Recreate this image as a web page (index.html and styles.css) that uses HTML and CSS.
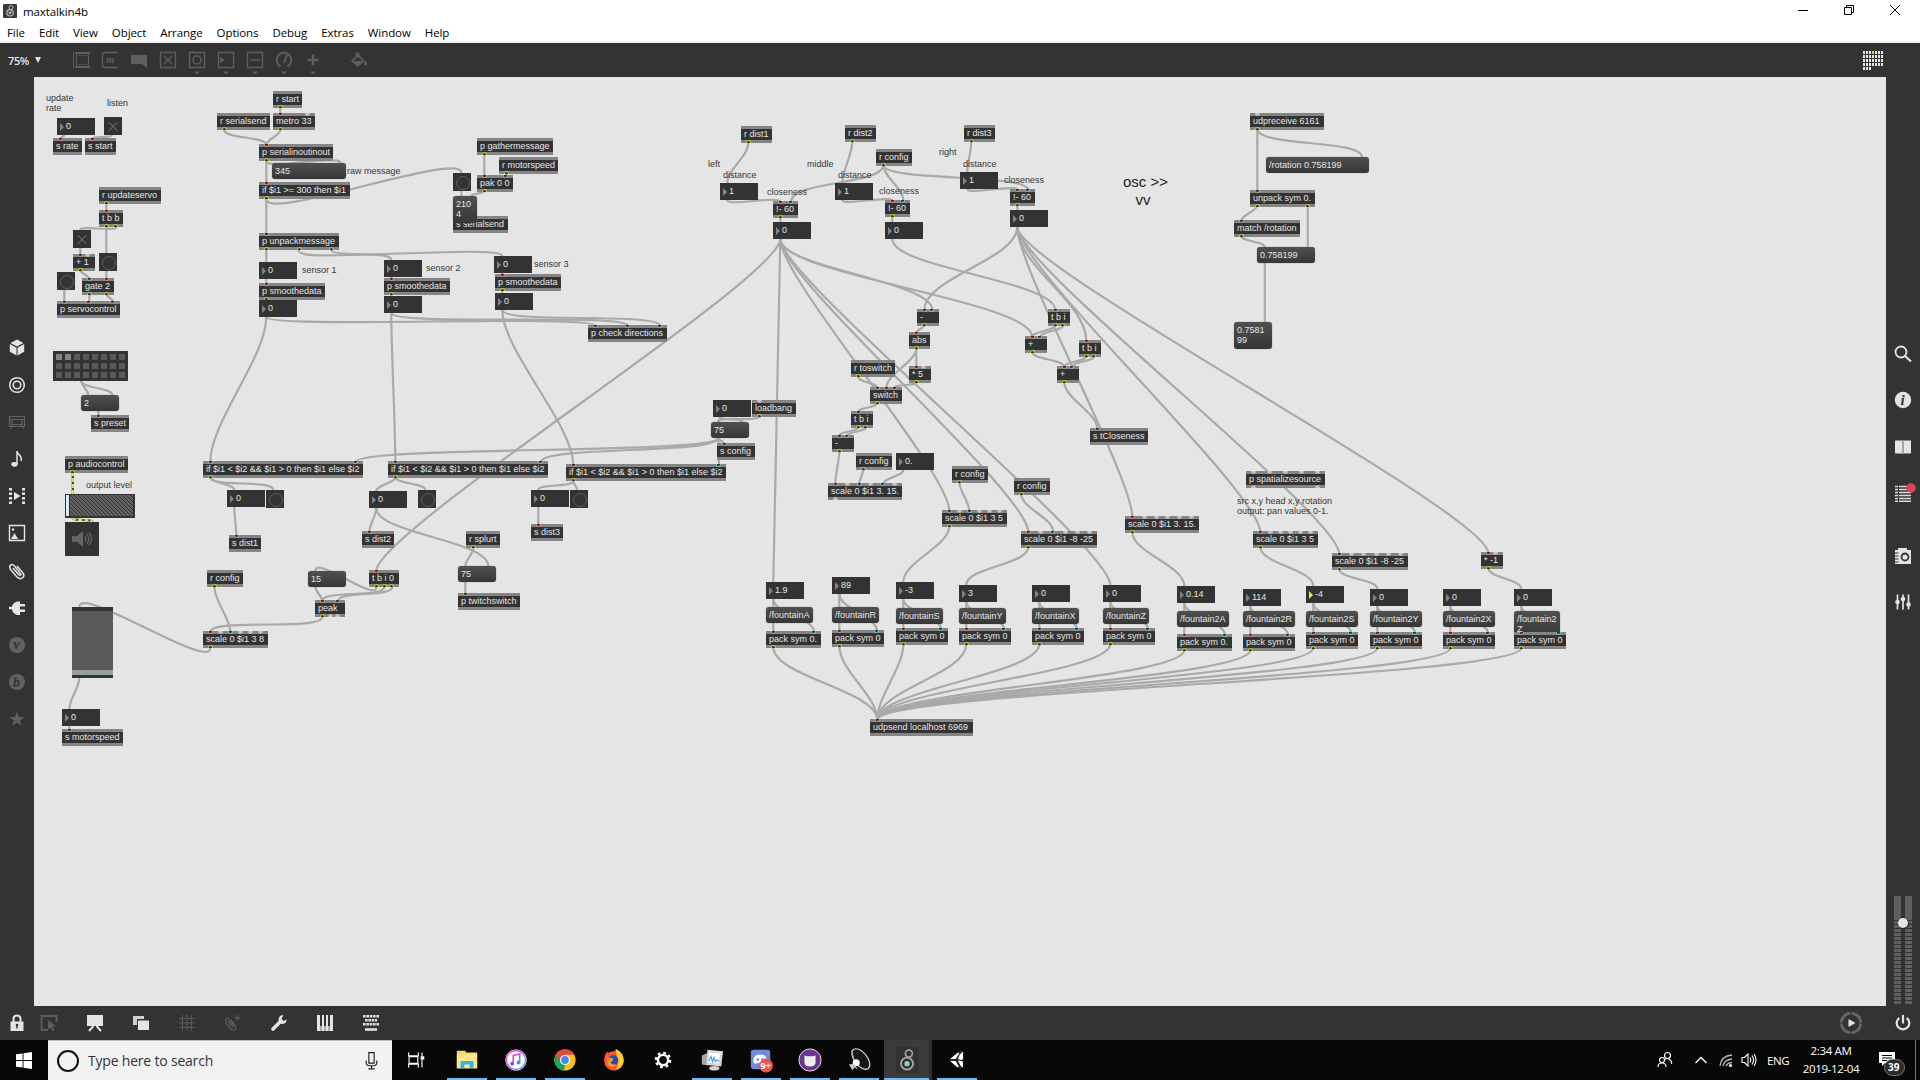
FILE: index.html
```html
<!DOCTYPE html>
<html lang="en">
<head>
<meta charset="utf-8">
<title>maxtalkin4b</title>
<link rel="stylesheet" href="styles.css">
</head>
<body>
<header class="titlebar">
  <svg class="app-icon" viewBox="0 0 14 14"><rect width="14" height="14" rx="1" fill="#3a3a3a"/><circle cx="8" cy="3.6" r="2" fill="none" stroke="#bbb"/><circle cx="7" cy="8.8" r="3.2" fill="none" stroke="#bbb" stroke-width="1.2"/><circle cx="7" cy="8.8" r="1.4" fill="#9fd5d2"/></svg>
  <span class="title">maxtalkin4b</span>
  <div class="window-buttons">
    <svg viewBox="0 0 12 12"><path d="M1 6.500H11" stroke="#000"/></svg>
    <svg viewBox="0 0 12 12"><path d="M1.500 3.500H8.500V10.500H1.500ZM3.500 3.500V1.500H10.500V8.500H8.500" fill="none" stroke="#000"/></svg>
    <svg viewBox="0 0 12 12"><path d="M1 1L11 11M11 1L1 11" stroke="#000"/></svg>
  </div>
</header>
<nav class="menubar"><span>File</span><span>Edit</span><span>View</span><span>Object</span><span>Arrange</span><span>Options</span><span>Debug</span><span>Extras</span><span>Window</span><span>Help</span></nav>

<div class="toolbar">
  <span class="zoom-level">75%</span><i class="zoom-arrow"></i>
  <div class="tools">
    <svg viewBox="0 0 18 24"><path d="M1.500 4V20M4.500 5V19M16.500 5V19" fill="none" stroke="#5e5e5e"/><path d="M3 5H17.500M3 19H17.500" stroke="#5e5e5e" stroke-width="2"/><path d="M4 7.500H17M4 16.500H17" stroke="#4a4a4a"/></svg>
    <svg viewBox="0 0 18 24"><path d="M17 4.500H4Q1.500 4.500 1.500 7V17Q1.500 19.500 4 19.500H17" fill="none" stroke="#5e5e5e" stroke-width="1.300"/><text x="5" y="15" class="serif-glyph small">m</text></svg>
    <svg viewBox="0 0 18 24"><path d="M1 7H17V20L11.500 16H1Z" fill="#5e5e5e"/></svg>
    <svg viewBox="0 0 18 24"><path d="M1.500 4.500H16.500V19.500H1.500ZM5 8L13 16M13 8L5 16" fill="none" stroke="#5e5e5e" stroke-width="1.400"/></svg>
    <svg viewBox="0 0 18 30"><path d="M1.500 7.500H16.500V22.500H1.500Z" fill="none" stroke="#5e5e5e" stroke-width="1.400"/><circle cx="9" cy="15" r="4" fill="none" stroke="#5e5e5e" stroke-width="1.500"/><path d="M6 26.500H12L9 29.500Z" fill="#5e5e5e"/></svg>
    <svg viewBox="0 0 18 30"><path d="M1.500 7.500H16.500V22.500H1.500Z" fill="none" stroke="#5e5e5e" stroke-width="1.400"/><path d="M3 12L8 15L3 18ZM6 26.500H12L9 29.500Z" fill="#5e5e5e"/></svg>
    <svg viewBox="0 0 18 30"><path d="M1.500 7.500H16.500V22.500H1.500ZM4 15H14" fill="none" stroke="#5e5e5e" stroke-width="1.400"/><path d="M6 26.500H12L9 29.500Z" fill="#5e5e5e"/></svg>
    <svg viewBox="0 0 18 30"><path d="M5.500 21.500A7.300 7.300 0 1 1 12.500 21.500M9 18L12 10" fill="none" stroke="#5e5e5e" stroke-width="2"/><path d="M6 26.500H12L9 29.500Z" fill="#5e5e5e"/></svg>
    <svg viewBox="0 0 18 30"><path d="M9 9.500V20.500M3.500 15H14.500" stroke="#5e5e5e" stroke-width="2.500"/><path d="M6 26.500H12L9 29.500Z" fill="#5e5e5e"/></svg>
    <svg class="bucket" viewBox="0 0 18 24"><path d="M1.500 13.500L8 7L14 13M6 9V6Q7.500 3.500 9 6V10" fill="none" stroke="#5e5e5e" stroke-width="1.500"/><path d="M1 13H14.500L8 19ZM15.500 12Q18.500 17.500 16 17.500T14.500 14Z" fill="#5e5e5e"/></svg>
  </div>
  <div class="calendar-grid" id="grid"></div>
</div>

<main class="workspace">
  <aside class="rail left-rail">
    <svg viewBox="0 0 18 18"><path d="M9 0.500L15.500 4L9 7.500L2.500 4ZM1.800 5L8.500 8.700V16.500L1.800 12.800ZM16.200 5L9.500 8.700V16.500L16.200 12.800Z" fill="#e4e4e4"/></svg>
    <svg viewBox="0 0 18 18"><circle cx="9" cy="9" r="7.300" fill="none" stroke="#e4e4e4" stroke-width="1.500"/><circle cx="9" cy="9" r="3.800" fill="none" stroke="#e4e4e4" stroke-width="1.600"/></svg>
    <svg viewBox="0 0 18 18"><path d="M1.500 3.500H16.500V13.500H1.500ZM1.500 6.500H16.500M3 13.500V15.500M15 13.500V15.500M4 6.500V13.500M14 6.500V13.500M4 11.500H14" fill="none" stroke="#626262" stroke-width="1.200"/></svg>
    <svg viewBox="0 0 18 18"><path d="M9 1V14M9 1C9 5 15 5 13 11" fill="none" stroke="#e4e4e4" stroke-width="1.500"/><ellipse cx="6.500" cy="14.300" rx="3.200" ry="2.400" fill="#e4e4e4"/></svg>
    <svg viewBox="0 0 18 18"><path d="M2.500 1V17M15.500 1V17" stroke="#e4e4e4" stroke-width="3" stroke-dasharray="2.500 2"/><path d="M6 5L12.500 9L6 13Z" fill="#e4e4e4"/></svg>
    <svg viewBox="0 0 18 18"><path d="M1.500 1.500H16.500V16.500H1.500Z" fill="none" stroke="#e4e4e4" stroke-width="1.400"/><path d="M3 15L6.500 9L10 15Z" fill="#e4e4e4"/><circle cx="5" cy="5.500" r="1.200" fill="#e4e4e4"/></svg>
    <svg viewBox="0 0 18 18"><path d="M5 6L10.500 12.500Q12 14 13 12.500L7 4.500Q4 1 2.200 3.500Q1 5.500 3 8L9 15Q12 18 15 15.500Q17 13 14.500 10.500L9 4" fill="none" stroke="#e4e4e4" stroke-width="1.500"/></svg>
    <svg viewBox="0 0 18 18"><path d="M1 7.800H4Q4.500 4 9 2.500H12V5H17V7.500H12V10.500H17V13H12V16H9Q4.500 14.500 4 10.300H1Z" fill="#e4e4e4"/></svg>
    <svg viewBox="0 0 18 18"><circle cx="9" cy="9" r="8" fill="#626262"/><text x="5.500" y="13" class="serif-glyph knock">v</text></svg>
    <svg viewBox="0 0 18 18"><circle cx="9" cy="9" r="8" fill="#626262"/><text x="5" y="14" class="serif-glyph knock">b</text></svg>
    <svg viewBox="0 0 18 18"><path d="M9 1.500L11 7H16.500L12 10.500L13.800 16L9 12.600L4.200 16L6 10.500L1.500 7H7Z" fill="#5e5e5e"/></svg>
  </aside>

  <section class="patcher" id="patcher">
    <svg class="cables" id="cables" viewBox="34 77 1852 929"></svg>
  </section>

  <aside class="rail right-rail">
    <svg viewBox="0 0 18 18"><circle cx="7" cy="7" r="5.500" fill="none" stroke="#e4e4e4" stroke-width="1.800"/><path d="M11 11L17 16.500" stroke="#e4e4e4" stroke-width="2.200"/></svg>
    <svg viewBox="0 0 18 18"><circle cx="9" cy="9" r="8.200" fill="#e4e4e4"/><text x="6.500" y="14" class="serif-glyph knock info">i</text></svg>
    <svg viewBox="0 0 18 18"><path d="M1 2.500H17V15.500H1Z" fill="#e4e4e4"/><path d="M9 2.500V15.500" stroke="#a5a5a5" stroke-width="2"/></svg>
    <svg viewBox="0 0 18 18"><path d="M1 2.500H4M5 2.500H17M1 5.500H4M5 5.500H17M1 8.500H4M5 8.500H17M1 11.500H4M5 11.500H17M1 14.500H4M5 14.500H17M1 17.200H4M5 17.200H17" stroke="#dcdfdc" stroke-width="1.500"/><circle cx="17" cy="4" r="4.700" fill="#de4450"/></svg>
    <svg class="spaced" viewBox="0 0 18 18"><path d="M1 3H4V1H13V3H17V17H1Z" fill="#e4e4e4"/><path d="M0 6H4.500M0 9H4.500M0 12H4.500M0 15H4.500" stroke="#333"/><circle cx="11" cy="10" r="3.500" fill="#e4e4e4" stroke="#333" stroke-width="1.800"/></svg>
    <svg viewBox="0 0 18 18"><path d="M3.500 1.500V16.500M9 1.500V16.500M14.500 1.500V16.500" stroke="#e4e4e4" stroke-width="1.700"/><circle cx="3.500" cy="9" r="2.300" fill="#e4e4e4"/><circle cx="9" cy="6" r="2.300" fill="#e4e4e4"/><circle cx="14.500" cy="11.500" r="2.300" fill="#e4e4e4"/></svg>
    <div class="volume"><i></i><i></i><b></b></div>
  </aside>
</main>

<footer class="statusbar">
  <svg class="lock" viewBox="0 0 18 18"><path d="M5.500 8V5Q5.500 1.500 9 1.500T12.500 5V8" fill="none" stroke="#e4e4e4" stroke-width="2"/><path d="M2.500 7.500H15.500V17H2.500Z" fill="#e4e4e4"/><circle cx="9" cy="11" r="1.300" fill="#333"/><path d="M9 11V14.500" stroke="#333" stroke-width="1.500"/></svg>
  <svg viewBox="0 0 18 18"><path d="M8 16H1.500V2H16.500V8" fill="none" stroke="#5e5e5e" stroke-width="1.800"/><path d="M8 6L16 12L12.500 12.500L14.500 16.500L12.500 17.300L11 13.500L8 15.500Z" fill="#5e5e5e"/></svg>
  <svg viewBox="0 0 18 18"><path d="M1 1H17V12H1Z" fill="#e4e4e4"/><path d="M7.500 12L3 17M10.500 12L15 17" stroke="#e4e4e4" stroke-width="2"/></svg>
  <svg viewBox="0 0 18 18"><path d="M1 2H12V5H5V11H1Z" fill="#cfcfcf"/><path d="M6 6.500H17V16H6Z" fill="#e4e4e4"/></svg>
  <svg viewBox="0 0 18 18"><path d="M4.500 1V17M9 1V17M13.500 1V17M1 4.500H17M1 9H17M1 13.500H17" stroke="#5a5a5a"/></svg>
  <svg viewBox="0 0 18 18"><path d="M4 7L8 12.500Q9.500 13.500 9.500 12L5.500 5.500Q3 3 1.800 5.500Q1 7 2.500 9.500L6.500 15Q9 17.500 11.500 15.500Q13 13.500 11 11L7 6M10.500 4H16.500M13.500 1V7" fill="none" stroke="#5a5a5a" stroke-width="1.400"/></svg>
  <svg viewBox="0 0 18 18"><path d="M3 15L10.500 7.500" stroke="#e4e4e4" stroke-width="3.600" stroke-linecap="round"/><path d="M13.500 1Q9 1 8.500 5.500T12.500 10Q16.500 9.500 16.800 5.500L13.500 7L11.500 5Z" fill="#e4e4e4"/></svg>
  <svg viewBox="0 0 18 18"><path d="M1 1H17V17H1Z" fill="#e4e4e4"/><path d="M5 12V17M9 12V17M13 12V17" stroke="#777"/><path d="M5 1V12M9 1V12M13 1V12" stroke="#333" stroke-width="2"/></svg>
  <svg viewBox="0 0 18 18"><path d="M1 2.200H17M3 6.200H15M1 10.200H17" stroke="#e4e4e4" stroke-width="2.400" stroke-dasharray="2.600 .75"/><path d="M3 15.500H15" stroke="#e4e4e4" stroke-width="2.600"/></svg>
  <svg class="transport" viewBox="0 0 24 24"><circle cx="12" cy="12" r="9.800" fill="none" stroke="#666" stroke-width="2.800" stroke-dasharray="14.200 1.190" stroke-dashoffset="-.6"/><path d="M9.500 8L16.500 12L9.500 16Z" fill="#e4e4e4"/></svg>
  <svg class="power" viewBox="0 0 18 18"><path d="M5.300 4A6.300 6.300 0 1 0 12.700 4M9 1V9.500" fill="none" stroke="#e4e4e4" stroke-width="2.200"/></svg>
</footer>

<div class="taskbar">
  <div class="start"><svg viewBox="0 0 16 17"><path d="M0 2.300L6.600 1.400V8H0ZM7.500 1.300L16 0V8H7.500ZM0 9H6.600V15.600L0 14.700ZM7.500 9H16V17L7.500 15.800Z" fill="#fff"/></svg></div>
  <div class="search"><i class="cortana"></i><span>Type here to search</span><svg viewBox="0 0 12 18"><path d="M3.500 1.500H8.500V11.500H3.500ZM1 9V11Q1 14 4 14H8Q11 14 11 11V9M6 14V16.500M3 17H9" fill="none" stroke="#222" stroke-width="1.100"/></svg></div>
  <div class="tasks">
    <div class="task view"><svg viewBox="0 0 26 26"><path d="M5 5V8.500H15.500V5M5 21V17.500H15.500V21M5.500 9.500H15V16.500H5.500ZM19.500 5V21" fill="none" stroke="#fff" stroke-width="1.200"/><path d="M18 9H22V12.500H18Z" fill="#fff"/></svg></div>
    <div class="task open"><svg viewBox="0 0 26 26"><path d="M2 3H11L12 5H24V22H2Z" fill="#f7d774"/><path d="M2 7H24V22H2Z" fill="#fde48f"/><path d="M6 22V14H20V22H16V18H10V22Z" fill="#37b3e8"/></svg></div>
    <div class="task open"><svg viewBox="0 0 26 26"><defs><linearGradient id="tunes" x2="1" y2="1"><stop stop-color="#fb4aa3"/><stop offset=".5" stop-color="#b04cf0"/><stop offset="1" stop-color="#30b8f5"/></linearGradient></defs><circle cx="13" cy="13" r="11.500" fill="#fff"/><circle cx="13" cy="13" r="10.300" fill="#fff" stroke="url(#tunes)" stroke-width="1.400"/><path d="M10 17V8L17 6.500V15.500" fill="none" stroke="url(#tunes)" stroke-width="1.800"/><circle cx="8.800" cy="17" r="2.100" fill="#7b55ee"/><circle cx="15.700" cy="15.700" r="2.100" fill="#4d87f3"/></svg></div>
    <div class="task open"><svg viewBox="0 0 26 26"><circle cx="13" cy="13" r="11.500" fill="#fbc116"/><path d="M3 7.300A11.500 11.500 0 0 1 23 7.300H13L8.200 15.800Z" fill="#df4a3c"/><path d="M3 7.300L8.300 15.800Q10 18.500 13 18.500L12 24.500A11.500 11.500 0 0 1 3 7.300" fill="#1ca261"/><circle cx="13" cy="13" r="5.500" fill="#fff"/><circle cx="13" cy="13" r="4.200" fill="#4889f4"/></svg></div>
    <div class="task"><svg viewBox="0 0 26 26"><circle cx="13" cy="14" r="10.500" fill="#ff6b28"/><path d="M2.500 14Q2 7 6 4L8 7L12 5Q15 2 15 1Q23 6 23.500 14Q21 22 15 24Q7 25 2.500 14" fill="#ff4f36"/><path d="M15 1Q24 5 23.500 14Q22 22 15 23Q20 16 16 9Z" fill="#ffcf2c"/><circle cx="12.500" cy="13" r="5.200" fill="#174fc7"/><path d="M5 10L12 11Q12 15 9 15Q11 19 16 18Q11 23 6 18Z" fill="#ff9624"/></svg></div>
    <div class="task"><svg viewBox="0 0 26 26"><circle cx="13" cy="13" r="5.500" fill="none" stroke="#fff" stroke-width="2.600"/><circle cx="13" cy="13" r="7.800" fill="none" stroke="#fff" stroke-width="2.400" stroke-dasharray="3 3.126"/></svg></div>
    <div class="task open"><svg viewBox="0 0 26 26"><path d="M2 8L9 5V19L2 18Z" fill="#a5aaa5"/><path d="M8 2L25 3.500L23 20L7 18.500Z" fill="#d9dad7"/><path d="M10 5L22 6L20.500 17L9 16Z" fill="#fff"/><path d="M9.500 14L12 9L13.500 15L15 10L16.500 15L18 13L21 14" fill="none" stroke="#4b9de0" stroke-width="1.200"/><ellipse cx="15.500" cy="22" rx="5.500" ry="2.500" fill="#cfcfcc"/></svg></div>
    <div class="task open"><svg viewBox="0 0 26 26"><rect x="2" y="2" width="21" height="21" rx="3" fill="#7389dc"/><path d="M5 16Q4 11 7 8Q12 6 17 8Q20 11 19 16Q17 18 15 16H9Q7 18 5 16" fill="#fff"/><circle cx="9.500" cy="12.500" r="1.500" fill="#7389dc"/><circle cx="14.500" cy="12.500" r="1.500" fill="#7389dc"/><circle cx="18.500" cy="19" r="7.500" fill="#ef5350"/><text x="12.500" y="22.700" class="badge-text">9+</text></svg></div>
    <div class="task open"><svg viewBox="0 0 26 26"><circle cx="13" cy="13" r="12" fill="#6d348f" stroke="#eee"/><path d="M7 8L10 9H16L19 8V16Q19 20 13 20T7 16Z" fill="#eee"/></svg></div>
    <div class="task open"><svg viewBox="0 0 26 26"><ellipse cx="15" cy="12" rx="7" ry="13" transform="rotate(-38 15 12)" fill="#171717" stroke="#ddd" stroke-width="1.200"/><path d="M5 2L8 14" stroke="#aaa"/><circle cx="10" cy="16" r="3.800" fill="#fff"/><path d="M2 18L7 17L12 23L8 21L6 24Z" fill="#c8c8c8"/></svg></div>
    <div class="task open active"><svg viewBox="0 0 26 26"><rect x="1" y="-1" width="25" height="28" rx="2" fill="#323232"/><circle cx="15" cy="6" r="3.800" fill="none" stroke="#aaa" stroke-width="1.700"/><circle cx="13" cy="17" r="6.500" fill="none" stroke="#aaa" stroke-width="2"/><circle cx="13" cy="17" r="2.800" fill="#93cfcb"/></svg></div>
    <div class="task open"><svg viewBox="0 0 26 26"><path d="M4 13L17 2L21 4L20 21L17 23Z" fill="#222"/><path d="M5.500 12L14 5L15.500 6L11.500 12ZM16 7L19.500 4V12L17.500 13L14 12ZM5.500 14H11.500L15 20L13.500 21ZM14 13.500L17.500 14L19.500 15V21L17 19.500Z" fill="#fff"/></svg></div>
  </div>
  <div class="tray">
    <svg viewBox="0 0 16 18"><circle cx="10.500" cy="4.500" r="3" fill="none" stroke="#fff" stroke-width="1.200"/><circle cx="5" cy="9" r="2.500" fill="none" stroke="#fff" stroke-width="1.200"/><path d="M1 16Q1 12 5 12T9 16M7.500 9Q10 6 13 9Q15 10 14.500 13" fill="none" stroke="#fff" stroke-width="1.200"/></svg>
    <svg class="chevron" viewBox="0 0 16 18"><path d="M2.500 12L8 6.500L13.500 12" fill="none" stroke="#fff" stroke-width="1.300"/></svg>
    <svg class="wifi" viewBox="0 0 16 18"><path d="M2 15Q3 5 14 4M5 15Q6 9 14 8M8 15Q9 12 14 11.500" fill="none" stroke="#bbb" stroke-width="1.300"/><circle cx="12.500" cy="14.500" r="1.600" fill="#fff"/></svg>
    <svg class="sound" viewBox="0 0 16 18"><path d="M1 6.500H3.500L7 3V15L3.500 11.500H1ZM9 6.500Q10.500 9 9 11.500M11 4.500Q14 9 11 13.500M13 3Q17 9 13 15" fill="none" stroke="#fff" stroke-width="1.100"/></svg>
    <span class="lang">ENG</span>
    <div class="clock"><span>2:34 AM</span><span>2019-12-04</span></div>
    <svg class="notice" viewBox="0 0 28 26"><path d="M1 2H17V13H7L4 16V13H1Z" fill="#fff"/><path d="M4 5.500H14M4 8H14M4 10.500H9" stroke="#000"/><rect x="6.500" y="9.500" width="20" height="16" rx="8" fill="#2b2b2b" stroke="#777"/><text x="10" y="21" class="badge-text">39</text></svg>
  </div>
</div>
<script src="patcher.js"></script>
</body>
</html>
```
FILE: styles.css
```css
* { box-sizing: border-box; }
html, body { margin: 0; width: 1920px; height: 1080px; overflow: hidden; }
body { display: flex; flex-direction: column; background: #333; font-family: "Open Sans", "Noto Sans", sans-serif; color: #000; }
svg { display: block; flex: none; }

.titlebar { height: 22px; flex: none; display: flex; align-items: center; background: #fff; padding-left: 3px; }
.app-icon { width: 14px; height: 14px; }
.title { margin: 1px 0 0 6px; font-size: 11.5px; line-height: 20px; letter-spacing: -.1px; }
.window-buttons { margin: -2px 19px 0 auto; display: flex; gap: 34px; }
.window-buttons svg { width: 12px; height: 12px; }

.menubar { height: 21px; flex: none; display: flex; gap: 14px; padding: 0 7px; background: #fff; border-bottom: 2px solid #eef0f0; font-size: 11.5px; line-height: 21px; letter-spacing: -.08px; }

.toolbar { height: 34px; flex: none; display: flex; align-items: center; padding: 0 37px 0 8px; }
.zoom-level { color: #e8e8e8; font-size: 11px; font-weight: 600; letter-spacing: -.4px; width: 22px; }
.zoom-arrow { margin-left: 5px; border: 3px solid transparent; border-top: 6px solid #e4e4e4; border-bottom: 0; }
.tools { display: flex; align-items: center; gap: 11px; margin-left: 30.5px; }
.tools svg { width: 18px; }
.tools .bucket { margin-left: 17px; }
.serif-glyph { font: italic 700 12px "Liberation Serif", serif; fill: #5e5e5e; }
.serif-glyph.small { font-size: 11px; }
.serif-glyph.knock { fill: #333; font-size: 14px; }
.serif-glyph.info { font-size: 15px; }
.calendar-grid { margin-left: auto; display: grid; grid-template-columns: repeat(7, 2px); gap: 1px; width: 20px; }
.calendar-grid i { height: 3px; background: #e4e4e4; }
.calendar-grid i.today { background: #e6cc25; }

.workspace { height: 929px; flex: none; display: flex; }
.rail { width: 34px; display: flex; flex-direction: column; align-items: center; }
.rail > svg { width: 18px; height: 18px; overflow: visible; }
.left-rail { padding-top: 262px; gap: 19.1px; }
.right-rail { padding-top: 268px; gap: 28.3px; }
.right-rail .spaced { margin-top: 17px; }
.volume { position: relative; display: flex; gap: 4px; margin-top: auto; margin-bottom: 2px; }
.volume i { width: 7px; height: 108px; background: linear-gradient(#5f5f5f 24px, transparent 24px), repeating-linear-gradient(#333 0 1px, #5f5f5f 1px 4px); }
.volume b { position: absolute; left: 4px; top: 22px; width: 10px; height: 10px; border-radius: 50%; background: #e4e4e4; box-shadow: 1px 1px 2px #222; }

.patcher { position: relative; flex: 1; background: #e5e5e5; overflow: hidden; font: 9px/10.3px "Liberation Sans", Arial, sans-serif; }
.cables { position: absolute; inset: 0; width: 1852px; height: 929px; }
.cables path { fill: none; stroke: #a9a9a9; stroke-width: 2.2; }
.cables .signal { stroke: #3c402c; }
.cables .signal-dash { stroke: #cdea6a; stroke-dasharray: 4 2; }
.node { position: absolute; color: #e6e6e6; white-space: pre; }
.object { height: 17px; padding-left: 3px; background: #333; border: solid #858585; border-width: 3px 0; line-height: 10.5px; }
.message { height: 16px; padding: 3px 3px 0; background: linear-gradient(#505050, #363636); border-radius: 3px; box-shadow: 0 0 1px #555; }
.message.tall { height: 27px; }
.number { width: 38px; height: 17px; padding-left: 9px; line-height: 16px; background: #333; }
.number::before { content: ""; position: absolute; left: 3px; top: 5px; border: 4px solid transparent; border-left-color: #838383; border-right: 0; }
.number.hot::before { border-left-color: #f1ee35; }
.toggle, .button { width: 18px; height: 18px; background: #333; }
.toggle::before, .toggle::after { content: ""; position: absolute; left: 3px; top: 8.5px; width: 12px; height: 1px; background: #737373; transform: rotate(45deg); }
.toggle::after { transform: rotate(-45deg); }
.button::before { content: ""; position: absolute; left: 3px; top: 3px; width: 12px; height: 12px; border: 1.5px solid #606060; border-radius: 50%; }
.comment { color: #363636; }
.comment.big { font-size: 15px; line-height: 18px; color: #222; }
.port { position: absolute; width: 5px; height: 3px; margin-left: -2.5px; }
.inlet { top: -3px; border-radius: 0 0 3px 3px; background: #333; border: 1px solid #d08d80; border-top: 0; }
.inlet.cold { border-color: #7fb9cc; }
.outlet { bottom: -3px; border-radius: 3px 3px 0 0; background: #333; border: 1px solid #b9cb38; border-bottom: 0; }
.port.idle { background: #c9c9c9; border-color: #b5b5b5; }
.preset { width: 75px; height: 30px; padding: 3px; display: grid; grid-template-columns: repeat(8, 6px); grid-auto-rows: 6px; gap: 3px; background: #333; }
.preset i { background: #595959; }
.preset i.stored { background: #858585; }
.gain { width: 70px; height: 24px; background: #333; padding: 1px 2px 2px 1px; display: flex; gap: 1px; }
.gain::before { content: ""; width: 3px; background: #d3edf0; }
.gain::after { content: ""; flex: 1; background: repeating-linear-gradient(45deg, #303030 0 1.2px, #626262 1.2px 2.83px); }
.slider { width: 41px; height: 71px; background: #595959; border-top: 4px solid #333; border-bottom: 3px solid #333; display: flex; align-items: flex-end; }
.slider::after { content: ""; width: 41px; height: 5px; background: #92a09f; }
.dac { width: 34px; height: 34px; padding: 6px; background: #333; }

.statusbar { height: 34px; flex: none; display: flex; align-items: center; gap: 28px; padding: 0 8px; }
.statusbar svg { width: 18px; height: 18px; }
.statusbar .lock { margin-right: -14.5px; }
.statusbar .transport { width: 24px; height: 24px; margin-left: auto; margin-right: 3px; }

.taskbar { height: 40px; flex: none; display: flex; background: #080808; color: #fff; }
.start { width: 48px; display: grid; place-items: center; }
.start svg { width: 16px; height: 17px; }
.search { width: 344px; background: #f2f2f2; border-top: 1px solid #bdbdbd; display: flex; align-items: center; color: #333; padding: 0 14px 0 9px; }
.cortana { width: 22px; height: 22px; border: 2.5px solid #111; border-radius: 50%; }
.search span { margin-left: 9px; font-size: 14px; letter-spacing: -.2px; }
.search svg { width: 13px; height: 19px; margin-left: auto; }
.tasks { display: flex; gap: 1px; }
.task { width: 48px; height: 40px; display: flex; justify-content: center; padding-top: 8px; }
.task.view { margin-right: 2px; }
.task svg { width: 24px; height: 24px; overflow: visible; }
.task.open { background: linear-gradient(#76b9ed, #76b9ed) 4px 38px / 40px 2px no-repeat; }
.task.active { background: linear-gradient(#76b9ed, #76b9ed) 0 38px / 48px 2px no-repeat, #3b3b3b; border-right: 3px solid #303030; }
.badge-text { font: 700 10px "Open Sans", sans-serif; fill: #fff; }
.tray { margin-left: auto; display: flex; align-items: center; width: 259px; border-right: 1px solid #777; margin-right: 4px; }
.tray svg { width: 16px; height: 18px; }
.tray .chevron { margin-left: 20px; }
.tray .wifi { margin-left: 9px; }
.tray .sound { margin-left: 7px; }
.lang { margin-left: 10px; width: 24px; font-size: 11.5px; letter-spacing: -.4px; }
.clock { width: 60px; margin-left: 10px; display: flex; flex-direction: column; align-items: center; font-size: 11.5px; line-height: 18px; letter-spacing: -.35px; white-space: nowrap; }
.tray .notice { width: 28px; height: 26px; margin: 5px 0 0 17px; }
```
FILE: patcher.js
```js
// Patcher contents: every box is placed at its own free position on the canvas.
const ORIGIN = { x: 34, y: 77 };
const patcher = document.getElementById('patcher');
const cables = document.getElementById('cables');

function node(kind, x, y, text, w) {
  const el = document.createElement('div');
  el.className = 'node ' + kind;
  el.style.left = (x - ORIGIN.x) + 'px';
  el.style.top = (y - ORIGIN.y) + 'px';
  if (w) el.style.width = w + 'px';
  if (text) el.textContent = text;
  patcher.appendChild(el);
  return el;
}

// Port codes: r hot inlet, b cold inlet, y outlet, . unconnected.
function ports(el, w, codes, side) {
  [...codes].forEach((code, i) => {
    const p = document.createElement('i');
    p.className = 'port ' + side + (code === 'b' ? ' cold' : '') + (code === '.' ? ' idle' : '');
    const step = codes.length > 1 ? (w - 14.4) / (codes.length - 1) : 0;
    p.style.left = (7.2 + step * i) + 'px';
    el.appendChild(p);
  });
}

const SCALE_IN = 'r.....';
const IF_TEXT = 'if $i1 < $i2 && $i1 > 0 then $i1 else $i2';
const PACK = [[766,631,55],[832,630,52],[896,628,52],[959,628,52],[1032,628,52],[1103,628,52],[1177,634,55],[1243,634,52],[1306,632,52],[1370,632,52],[1443,632,52],[1514,632,52]];
const NUMBER_Y = [582,577,582,585,585,585,586,589,586,589,589,589];
const VALUES = ['1.9','89','-3','3','0','0','0.14','114','-4','0','0','0'];
const NAMES = ['A','R','S','Y','X','Z','2A','2R','2S','2Y','2X','2\nZ'];

const objects = [
  [53,138,29,'s rate','r',''],[85,138,31,'s start','r',''],[99,187,62,'r updateservo','','y'],
  [99,210,24,'t b b','r','yy'],[73,254,22,'+ 1','r.','y'],[82,278,32,'gate 2','br','yy'],
  [57,301,63,'p servocontrol','rrr',''],[217,113,53,'r serialsend','','y'],[273,91,29,'r start','','y'],
  [273,113,42,'metro 33','r.','y'],[259,144,74,'p serialinoutinout','r','y'],
  [259,182,91,'if $i1 >= 300 then $i1','r','y'],[259,233,80,'p unpackmessage','r','yyy'],
  [259,283,66,'p smoothedata','r','y'],[384,278,66,'p smoothedata','r','y'],[495,274,66,'p smoothedata','r','y'],
  [477,138,76,'p gathermessage','','y'],[499,157,59,'r motorspeed','','y'],[477,175,36,'pak 0 0','rr','y'],
  [453,216,55,'s serialsend','',''],[588,325,79,'p check directions','rrr',''],[91,415,38,'s preset','r',''],
  [65,456,63,'p audiocontrol','','y'],[62,729,61,'s motorspeed','r',''],
  [203,461,160,IF_TEXT,'rb','y'],[388,461,160,IF_TEXT,'rb','y'],[566,464,160,IF_TEXT,'rb','y'],
  [229,535,32,'s dist1','r',''],[362,531,32,'s dist2','r',''],[531,524,32,'s dist3','r',''],
  [207,570,36,'r config','','y'],[369,570,30,'t b i 0','r','yyy'],[315,600,30,'peak','rr','y..'],
  [203,631,65,'scale 0 $i1 3 8','r.b...','y'],[466,531,34,'r splurt','','y'],[458,593,62,'p twitchswitch','r',''],
  [741,126,31,'r dist1','','y'],[845,125,31,'r dist2','','y'],[964,125,31,'r dist3','','y'],[876,149,36,'r config','','y'],
  [773,201,25,'!- 60','rb','y'],[885,200,25,'!- 60','rb','y'],[1010,189,25,'!- 60','rb','y'],
  [917,309,22,'-','rb','y'],[909,332,21,'abs','r','y'],[909,366,22,'* 5','r.','y'],[851,360,44,'r toswitch','','y'],
  [870,387,32,'switch','brr','y'],[1048,309,22,'t b i','r','yy'],[1025,336,22,'+','rb','y'],
  [1079,340,22,'t b i','r','yy'],[1057,366,22,'+','rb','y'],[752,400,44,'loadbang','.','y'],
  [717,443,38,'s config','r',''],[851,411,22,'t b i','r','yy'],[832,435,22,'-','rb','y'],[856,453,36,'r config','','y'],
  [828,483,74,'scale 0 $i1 3. 15.','r.b.b.','.'],[952,466,36,'r config','','y'],[942,510,65,'scale 0 $i1 3 5','r.b...','y'],
  [1014,478,36,'r config','','y'],[1021,531,76,'scale 0 $i1 -8 -25','r.b...','y'],[1090,428,58,'s tCloseness','r',''],
  [1125,516,74,'scale 0 $i1 3. 15.',SCALE_IN,'y'],[870,719,103,'udpsend localhost 6969','r',''],
  [1246,471,79,'p spatializesource','.....','..'],[1253,531,65,'scale 0 $i1 3 5',SCALE_IN,'y'],
  [1332,553,76,'scale 0 $i1 -8 -25',SCALE_IN,'y'],[1481,552,22,'* -1','r.','y'],
  [1250,113,74,'udpreceive 6161','.','y'],[1250,190,65,'unpack sym 0.','r','yy'],[1234,220,66,'match /rotation','r','y']
];

const numbers = [[57,118,'0'],[259,262,'0'],[259,300,'0'],[384,260,'0'],[384,296,'0'],[494,256,'0'],[495,293,'0'],[62,709,'0'],
  [227,490,'0'],[369,491,'0'],[531,490,'0'],[720,183,'1'],[835,183,'1'],[960,172,'1'],[773,222,'0'],[885,222,'0'],
  [1010,210,'0'],[713,400,'0'],[896,453,'0.']];

const messages = [[272,163,74,'345'],[453,196,24,'210\n4'],[81,395,37.5,'2'],[308,571,37.5,'15'],[458,566,37.5,'75'],[711,422,37.5,'75'],
  [1266,157,103,'/rotation 0.758199'],[1257,247,58,'0.758199'],[1234,322,37.5,'0.7581\n99']];

const comments = [[46,93,'update\nrate'],[107,98,'listen'],[347,166,'raw message'],[302,265,'sensor 1'],[426,263,'sensor 2'],[534,259,'sensor 3'],
  [86,480,'output level'],[708,159,'left'],[723,170,'distance'],[767,187,'closeness'],[807,159,'middle'],[838,170,'distance'],
  [879,186,'closeness'],[939,147,'right'],[963,159,'distance'],[1004,175,'closeness'],[1237,496,'src x,y head x,y rotation\noutput: pan values 0-1.']];

const links = [[64,135,60,139],[111,135,92,139],[106,204,106,211],[116,227,80,230],[106,227,106,253],[106,271,106,279],[80,248,80,255],
  [80,270,89,279],[64,290,64,302],[89,294,89,302],[106,294,113,302],[224,130,266,145],[280,108,280,114],[280,130,266,145],
  [266,161,266,183],[266,161,340,163],[266,199,266,234],[266,199,461,173],[266,250,266,262],[298,250,391,260],[331,250,502,256],
  [266,279,266,284],[266,299,266,301],[266,317,210,462],[266,317,595,326],[391,277,391,279],[391,295,391,297],[391,313,395,462],
  [391,313,628,326],[502,273,502,275],[502,291,502,294],[502,310,573,465],[502,310,660,326],[484,154,484,176],[506,173,506,176],
  [484,191,471,196],[461,191,461,196],[81,381,88,395],[81,381,112,395],[98,411,98,416],[210,477,234,490],[210,477,273,490],
  [234,507,236,536],[395,477,376,491],[395,477,425,490],[376,508,369,532],[376,508,488,566],[573,481,538,490],[573,481,577,490],
  [538,507,538,525],[473,548,465,566],[465,582,465,594],[214,587,230,632],[376,587,315,571],[384,587,322,601],[392,587,338,601],
  [322,617,210,632],[210,648,79,607],[315,587,322,601],[79,678,69,709],[69,726,69,730],[718,438,355.7,462],[718,438,540.7,462],
  [718,438,718.7,465],[718,438,724,444],[759,416,718,422],[720,417,718,422],[720,417,742,422],[748,143,727,183],[852,142,842,183],
  [971,142,967,172],[883,165,791,201],[883,165,903,200],[883,165,1028,190],[727,200,780,202],[842,200,892,201],[967,189,1017,190],
  [780,217,780,222],[892,216,892,222],[1017,205,1017,210],[780,239,376,571],[780,239,773,582],[780,239,949,511],[780,239,1028,532],
  [780,239,1110,585],[780,239,932,310],[780,239,1032,337],[892,239,1055,310],[1017,227,924,310],[1017,227,1086,341],
  [1017,227,1132,517],[1017,227,1260,532],[1017,227,1339,554],[1017,227,1488,553],[924,325,916,333],[916,348,916,367],
  [916,348,886,388],[858,377,877,388],[916,382,894.5,388],[877,403,858,412],[858,427,839,436],[866,427,847,436],[839,451,835,484],
  [863,469,859,484],[903,470,883,484],[959,482,969,511],[1021,494,1053,532],[949,526,903,582],[1028,547,966,585],
  [1055,325,1032,337],[1063,325,1040,337],[1032,352,1064,367],[1086,356,1064,367],[1094,356,1072,367],[1064,382,1097,429],
  [1132,532,1184,586],[1260,547,1313,586],[1339,569,1377,589],[1488,568,1521,589],[1257,129,1257,191],[1257,129,1361.5,157],
  [1257,205,1241,221],[1307.5,205,1307.5,247],[1241,236,1264.5,247],[1264.5,263,1264.5,322]];

const fountainMessages = [];
PACK.forEach(([x, y, w], i) => {
  const my = i < 2 ? 607 : i < 6 ? 608 : 611;
  const ny = NUMBER_Y[i];
  const mw = i < 5 ? 47 : (i === 5 || i === 11) ? 46 : 52;
  fountainMessages.push([x, my, mw, '/fountain' + NAMES[i]]);
  links.push([x + 7, ny + 17, x + 7, my], [x + 7, my + 16, x + 7, y + 1], [x + 7, ny + 17, x + w - 7.3, y + 1], [x + 7, y + 16, 877, 720]);
});

// Cables leave and enter vertically; loops going back up bend by a fixed amount,
// shorter when the two ends are close together.
function cable([x1, y1, x2, y2], cls) {
  const dy = y2 - y1;
  const dx = Math.abs(x2 - x1);
  const bend = dy < 0 ? (dx < 100 ? 16 : 23) : Math.min(40, dy * 0.27 + Math.min(10, dx * 0.12));
  const p = document.createElementNS('http://www.w3.org/2000/svg', 'path');
  p.setAttribute('d', `M${x1 + .3} ${y1}C${x1 + .3} ${y1 + bend} ${x2 + .3} ${y2 - bend} ${x2 + .3} ${y2}`);
  if (cls) p.setAttribute('class', cls);
  cables.appendChild(p);
}
links.forEach(l => cable(l));
[[72.5,472,72.5,494],[72.5,518,92,522]].forEach(l => { cable(l, 'signal'); cable(l, 'signal-dash'); });

comments.forEach(([x, y, t]) => node('comment', x, y, t));
node('comment big', 1123, 173, 'osc >>');
node('comment big', 1135.5, 191, 'vv');
function object([x, y, w, text, ins, outs]) {
  const el = node('object', x, y, text, w);
  ports(el, w, ins, 'inlet');
  ports(el, w, outs, 'outlet');
}
objects.forEach(object);
numbers.forEach(([x, y, t]) => node('number', x, y, t));
[...messages, ...fountainMessages].forEach(([x, y, w, t]) => node('message' + (t.includes('\n') ? ' tall' : ''), x, y, t, w));
PACK.forEach(([x, y, w], i) => {
  node('number' + (i === 8 ? ' hot' : ''), x, NUMBER_Y[i], VALUES[i]);
  object([x, y, w, w === 55 ? 'pack sym 0.' : 'pack sym 0', 'rb', 'y']);
});
[[104,117],[73,230]].forEach(([x, y]) => node('toggle', x, y));
[[99,253],[57,272],[453,173],[266,490],[418,490],[570,490]].forEach(([x, y]) => node('button', x, y));
node('preset', 53, 351).innerHTML = '<i class="stored"></i>'.repeat(2) + '<i></i>'.repeat(22);
node('gain', 65, 494);
node('dac', 65, 522).innerHTML = '<svg width="22" height="22" viewBox="0 0 22 22"><path d="M1 8H6L12 3V19L6 14H1Z" fill="#646464"/><path d="M14 8Q16 11 14 14M16 6Q19.500 11 16 16M18 4.500Q23 11 18 17.500" fill="none" stroke="#646464" stroke-width="1.300"/></svg>';
node('slider', 72, 607);

const grid = document.getElementById('grid');
for (let i = 0; i < 31; i++) {
  const cell = document.createElement('i');
  if (i === 3) cell.className = 'today';
  grid.appendChild(cell);
}
```
